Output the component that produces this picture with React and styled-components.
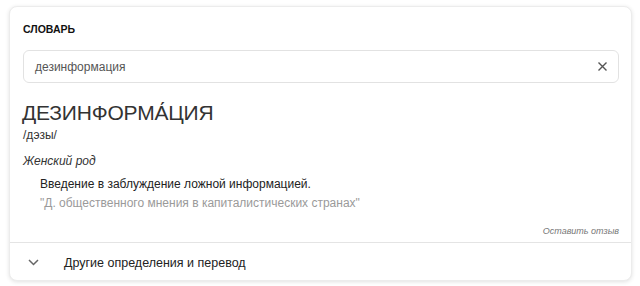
import styled, { createGlobalStyle } from 'styled-components';

const GlobalStyle = createGlobalStyle`
    html, body {
        margin: 0;
        background: #ffffff;
    }
    body {
        padding: 6px 8px 5px 9px;
        font-family: "Liberation Sans", Arial, sans-serif;
        color: #222;
    }
`

const Card = styled.div`
    width: 623px;
    height: 275px;
    box-sizing: border-box;
    border-radius: 8px;
    background: #fff;
    border: 1px solid #ececec;
    box-shadow: 0 1px 4px rgba(0,0,0,0.12);
    display: flex;
    flex-direction: column;
    overflow: hidden;`

const Body = styled.div`
    flex: 1;
    padding: 16px 12px 0 13px;
    display: flex;
    flex-direction: column;`

const Heading = styled.div`
    font-size: 10.5px;
    line-height: 13px;
    font-weight: bold;
    color: #111;`

const Search = styled.div`
    margin-top: 14px;
    height: 33px;
    box-sizing: border-box;
    border: 1px solid #e2e2e2;
    border-radius: 6px;
    display: flex;
    align-items: center;
    padding: 0 11px 0 11px;
    font-size: 12px;
    color: #555;`

const SearchText = styled.span`
    flex: 1;`

const ClearIcon = styled.svg`
    width: 9px;
    height: 9px;
    stroke: #555;
    stroke-width: 1.4;`

const Word = styled.div`
    margin-top: 18px;
    font-size: 21px;
    line-height: 24px;
    color: #333;
    letter-spacing: -0.2px;
    margin-left: -1px;`

const Transcription = styled.div`
    margin-top: 3px;
    font-size: 12px;
    line-height: 15px;
    color: #333;`

const Gender = styled.div`
    margin-top: 11px;
    font-size: 12px;
    line-height: 15px;
    font-style: italic;
    color: #333;`

const Meanings = styled.div`
    margin-top: 7px;
    padding-left: 17px;
    display: flex;
    flex-direction: column;
    gap: 2px;`

const Meaning = styled.div`
    font-size: 12px;
    line-height: 17px;
    color: ${p => p.$muted ? '#9a9a9a' : '#222'};`

const Feedback = styled.div`
    margin-top: auto;
    margin-bottom: 6px;
    align-self: flex-end;
    font-size: 9px;
    font-style: italic;
    color: #777;`

const Footer = styled.div`
    height: 38px;
    box-sizing: border-box;
    padding: 2px 0 0 18px;
    border-top: 1px solid #e4e4e4;
    display: flex;
    align-items: center;
    gap: 25px;
    font-size: 12.5px;
    color: #222;`

const Chevron = styled.svg`
    width: 11px;
    height: 7px;
    stroke: #666;
    stroke-width: 1.5;
    fill: none;`

function App() {
    return (
        <>
            <GlobalStyle/>
            <Card>
                <Body>
                    <Heading>СЛОВАРЬ</Heading>
                    <Search>
                        <SearchText>дезинформация</SearchText>
                        <ClearIcon viewBox="0 0 9 9">
                            <path d="M0.5 0.5 L8.5 8.5 M8.5 0.5 L0.5 8.5"/>
                        </ClearIcon>
                    </Search>
                    <Word>ДЕЗИНФОРМА́ЦИЯ</Word>
                    <Transcription>/дэзы/</Transcription>
                    <Gender>Женский род</Gender>
                    <Meanings>
                        <Meaning>Введение в заблуждение ложной информацией.</Meaning>
                        <Meaning $muted>"Д. общественного мнения в капиталистических странах"</Meaning>
                    </Meanings>
                    <Feedback>Оставить отзыв</Feedback>
                </Body>
                <Footer>
                    <Chevron viewBox="0 0 11 7">
                        <path d="M1 1 L5.5 5.5 L10 1"/>
                    </Chevron>
                    Другие определения и перевод
                </Footer>
            </Card>
        </>
    );
}

export default App;
